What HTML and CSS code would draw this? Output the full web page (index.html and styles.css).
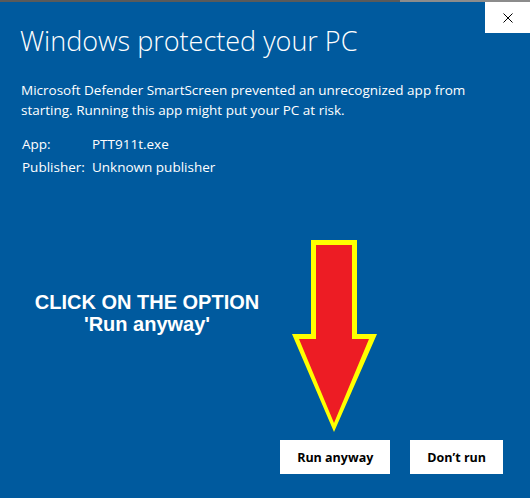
FILE: index.html
```html
<!DOCTYPE html>
<html lang="en">
<head>
<meta charset="utf-8">
<title>Windows protected your PC</title>
<link rel="stylesheet" href="styles.css">
</head>
<body>
<div class="topline"></div>
<div class="dialog">
  <div class="head">
    <h1 class="title">Windows protected your PC</h1>
    <button class="close" aria-label="Close">
      <svg width="10" height="10" viewBox="0 0 10 10"><path d="M0.5 0.5 L9.5 9.5 M9.5 0.5 L0.5 9.5" stroke="#000" stroke-width="1" fill="none"/></svg>
    </button>
  </div>
  <p class="message">Microsoft Defender SmartScreen prevented an unrecognized app from starting. Running this app might put your PC at risk.</p>
  <div class="info">
    <span class="label">App:</span><span class="value">PTT911t.exe</span>
    <span class="label">Publisher:</span><span class="value">Unknown publisher</span>
  </div>
  <div class="note">CLICK ON THE OPTION<br>'Run anyway'</div>
  <div class="actions">
    <button class="btn">Run anyway</button>
    <button class="btn">Don’t run</button>
  </div>
  <svg class="arrow" width="90" height="196" viewBox="0 0 90 196">
    <polygon points="21,2 67,2 67,96 87,96 44,194 2,96 21,96" fill="#ffff00"/>
    <polygon points="26,7 62,7 62,101 79,101 44,185 9,101 26,101" fill="#ed1c24"/>
  </svg>
</div>
</body>
</html>
```
FILE: styles.css
```css
* { box-sizing: border-box; }
html, body { margin: 0; padding: 0; }
body {
  background: #005a9e;
  width: 530px;
  height: 498px;
  overflow: hidden;
}
.topline {
  height: 2px;
  background: linear-gradient(to right, #5a5a5a 0, #5a5a5a 400px, #8c8c8c 400px);
}
.dialog {
  position: relative;
  height: 496px;
  display: flex;
  flex-direction: column;
  color: #fff;
  font-family: "Open Sans", "Noto Sans", sans-serif;
}
.head {
  display: flex;
  justify-content: space-between;
  align-items: flex-start;
}
.title {
  margin: 0;
  padding: 21px 0 0 20px;
  font-size: 27px;
  line-height: 36px;
  font-weight: 300;
  color: #fff;
}
.close {
  width: 45px;
  height: 31px;
  border: 0;
  padding: 0;
  margin: 0;
  background: #fff;
  display: flex;
  align-items: center;
  justify-content: center;
}
.close svg { display: block; }
.message {
  margin: 21px 0 0 21px;
  width: 470px;
  font-size: 13.5px;
  line-height: 20px;
}
.info {
  margin: 13px 0 0 22px;
  display: grid;
  grid-template-columns: 70px auto;
  font-size: 13.5px;
  line-height: 23px;
}
.note {
  margin: 112px 0 0 33px;
  width: 228px;
  text-align: center;
  font-family: "Liberation Sans", Arial, sans-serif;
  font-weight: bold;
  font-size: 20px;
  line-height: 22px;
}
.actions {
  margin-top: auto;
  padding: 0 27px 24px 0;
  display: flex;
  justify-content: flex-end;
  gap: 20px;
}
.btn {
  height: 34px;
  border: 0;
  background: #fff;
  color: #000;
  font-family: "Open Sans", "Noto Sans", sans-serif;
  font-weight: 700;
  font-size: 12.5px;
  padding: 0 17px;
}
.arrow {
  position: absolute;
  left: 290px;
  top: 236px;
}
```
